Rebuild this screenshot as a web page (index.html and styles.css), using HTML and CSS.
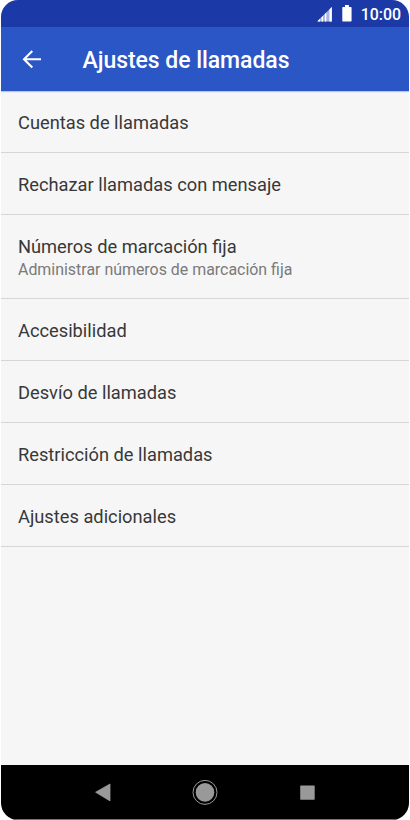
FILE: index.html
```html
<!DOCTYPE html>
<html lang="es">
<head>
<meta charset="utf-8">
<title>Ajustes de llamadas</title>
<link rel="stylesheet" href="styles.css">
</head>
<body>
<div class="phone">
  <div class="status">
    <svg class="signal" width="16" height="16" viewBox="0 0 16 16"><path d="M0 15.500L15 1V15.500Z" fill="#a9b5e0"/><path d="M1 14.800L3 12.800V15.500H1ZM4.600 11.300L6 10V15.500H4.600ZM8 8L9.400 6.600V15.500H8ZM12.600 3.400L15 1V15.500H12.600Z" fill="#fff"/></svg>
    <svg class="battery" width="10" height="17" viewBox="0 0 10 17"><path d="M3 0H7V2H9Q9.700 2 9.700 2.700V15.800Q9.700 16.500 9 16.500H1Q.3 16.500 .3 15.800V2.700Q.3 2 1 2H3Z" fill="#fff"/></svg>
    <span class="time">10:00</span>
  </div>
  <header class="header">
    <svg class="back" width="20" height="20" viewBox="0 0 20 20"><path d="M19 10.300H2.500M10.300 2L2 10.300L10.300 18.600" fill="none" stroke="#fff" stroke-width="2.100"/></svg>
    <h1 class="title">Ajustes de llamadas</h1>
  </header>
  <main class="list">
    <div class="row">Cuentas de llamadas</div>
    <div class="row">Rechazar llamadas con mensaje</div>
    <div class="row row-tall">Números de marcación fija<span class="sub">Administrar números de marcación fija</span></div>
    <div class="row">Accesibilidad</div>
    <div class="row">Desvío de llamadas</div>
    <div class="row">Restricción de llamadas</div>
    <div class="row">Ajustes adicionales</div>
  </main>
  <nav class="nav">
    <svg width="26" height="26" viewBox="0 0 26 26"><path d="M5.600 13.200L20 5V21.900Z" fill="#999" stroke="#999" stroke-width=".8" stroke-linejoin="round"/></svg>
    <svg width="26" height="26" viewBox="0 0 26 26"><circle cx="13" cy="13.400" r="12" fill="none" stroke="#999" stroke-width="1"/><circle cx="13" cy="13.400" r="9.300" fill="#999"/></svg>
    <svg width="26" height="26" viewBox="0 0 26 26"><rect x="6.200" y="6.500" width="14.500" height="14.200" rx=".6" fill="#999"/></svg>
  </nav>
</div>
</body>
</html>
```
FILE: styles.css
```css
body {
  margin: 0;
  background: #fff;
  font-family: Roboto, sans-serif;
}
.phone {
  display: flex;
  flex-direction: column;
  width: 408px;
  height: 820px;
  margin: 0 auto;
  overflow: hidden;
  border-radius: 17px;
  background: #f6f6f6;
}
.status {
  display: flex;
  align-items: center;
  height: 27px;
  padding: 0 8px 0 316px;
  background: #1c39a8;
  color: #fff;
}
.battery {
  margin-left: 9px;
}
.time {
  margin-left: 9px;
  padding-top: 2px;
  font-size: 15.9px;
  font-weight: 500;
  line-height: 27px;
}
.header {
  display: flex;
  align-items: center;
  height: 64px;
  flex: none;
  background: #2a56c6;
  box-shadow: 0 1px 1px #b9c5e4;
  color: #fff;
}
.back {
  margin-left: 21px;
}
.title {
  margin: 3px 0 0 40.500px;
  font-size: 23px;
  font-weight: 500;
  letter-spacing: -0.05px;
}
.list {
  flex: 1;
}
.row {
  box-sizing: border-box;
  height: 62px;
  padding: 20px 17px 0;
  border-bottom: 1px solid #d6d6d6;
  color: #383838;
  font-size: 18.28px;
  line-height: 23px;
}
.row-tall {
  height: 84px;
}
.sub {
  display: block;
  color: #7a7a7a;
  font-size: 15.93px;
}
.nav {
  display: flex;
  gap: 76px;
  height: 54px;
  padding: 0 89px;
  align-items: center;
  background: #000;
  border-bottom: 1px solid #777;
}
```
